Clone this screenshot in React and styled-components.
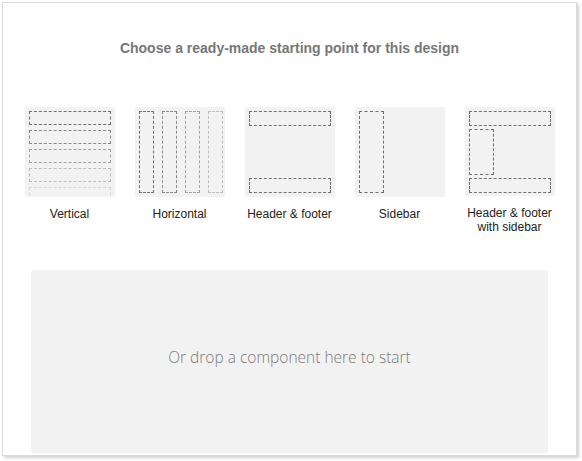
import styled, { createGlobalStyle } from 'styled-components';

const Global = createGlobalStyle`
  html, body {
    margin: 0;
    padding: 0;
    background: #ffffff;
  }
  body {
    font-family: "Liberation Sans", Arial, sans-serif;
  }
`;

const Page = styled.div`
  width: 582px;
  height: 461px;
  padding: 2px 0 0 2px;
  box-sizing: border-box;
`;

const Panel = styled.div`
  width: 575px;
  height: 454px;
  box-sizing: border-box;
  border: 1px solid #dadada;
  box-shadow: 2px 2px 3px rgba(0, 0, 0, 0.18);
  background: #ffffff;
  display: flex;
  flex-direction: column;
  align-items: center;
  padding: 37px 28px 2px;
`;

const Title = styled.h2`
  margin: 0;
  font-size: 14px;
  line-height: 16px;
  font-weight: bold;
  color: #777777;
`;

const Gallery = styled.div`
  display: flex;
  gap: 20px;
  margin-top: 51px;
  height: 127px;
`;

const Option = styled.div`
  width: 90px;
  display: flex;
  flex-direction: column;
  align-items: center;
`;

const Thumb = styled.div`
  width: 90px;
  height: 90px;
  box-sizing: border-box;
  padding: 4px;
  background: #f2f2f2;
  border-radius: 2px;
  overflow: hidden;
  display: flex;
  flex-direction: ${(p) => (p.$row ? 'row' : 'column')};
  gap: ${(p) => p.$gap || 0}px;
  justify-content: ${(p) => (p.$spread ? 'space-between' : 'flex-start')};
`;

const Slot = styled.div`
  flex: none;
  box-sizing: border-box;
  border: 1px dashed #6f6f6f;
  width: ${(p) => (p.$w ? `${p.$w}px` : '100%')};
  height: ${(p) => (p.$h ? `${p.$h}px` : '100%')};
  opacity: ${(p) => p.$fade ?? 1};
`;

const Label = styled.div`
  margin-top: 10px;
  font-size: 12px;
  line-height: 14px;
  color: #222222;
  text-align: center;
`;

const DropZone = styled.div`
  align-self: stretch;
  flex: 1;
  margin-top: 36px;
  padding-bottom: 10px;
  background: #f2f2f2;
  border-radius: 2px;
  display: flex;
  align-items: center;
  justify-content: center;
  font-family: "Open Sans", "Noto Sans", sans-serif;
  font-size: 15.5px;
  font-weight: 300;
  color: #7a7a7a;
`;

const fades = [1, 0.8, 0.6, 0.4, 0.2];

export default function App() {
  return (
    <>
      <Global />
      <Page>
        <Panel>
          <Title>Choose a ready-made starting point for this design</Title>
          <Gallery>
            <Option>
              <Thumb $gap={5}>
                {fades.map((f) => (
                  <Slot key={f} $h={14} $fade={f} />
                ))}
              </Thumb>
              <Label>Vertical</Label>
            </Option>
            <Option>
              <Thumb $row $gap={8}>
                {fades.slice(0, 4).map((f) => (
                  <Slot key={f} $w={15} $fade={f} />
                ))}
              </Thumb>
              <Label>Horizontal</Label>
            </Option>
            <Option>
              <Thumb $spread>
                <Slot $h={15} />
                <Slot $h={15} />
              </Thumb>
              <Label>Header &amp; footer</Label>
            </Option>
            <Option>
              <Thumb>
                <Slot $w={25} />
              </Thumb>
              <Label>Sidebar</Label>
            </Option>
            <Option>
              <Thumb $gap={3}>
                <Slot $h={15} />
                <Slot $w={25} $h={46} />
                <Slot $h={15} />
              </Thumb>
              <Label>
                Header &amp; footer
                <br />
                with sidebar
              </Label>
            </Option>
          </Gallery>
          <DropZone>Or drop a component here to start</DropZone>
        </Panel>
      </Page>
    </>
  );
}
